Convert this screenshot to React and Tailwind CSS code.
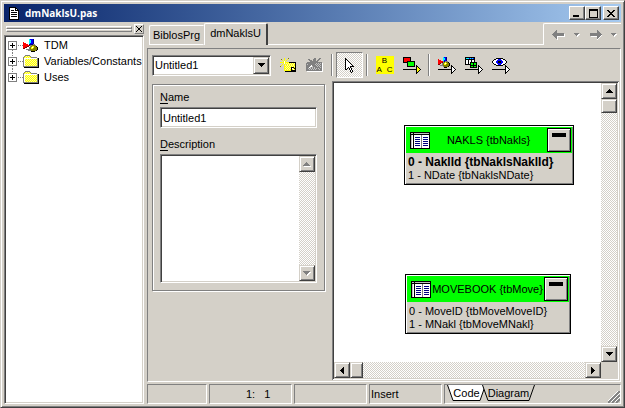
/**
 * App.jsx – Code editor window with the diagram page open
 * Composes: TitleBar, UnitTree, TabStrip, Toolbar, DetailsPanel, DiagramCanvas, StatusBar
 */

// Shared bevels
const RAISED = 'bg-[#d4d0c8] border border-t-[#d4d0c8] border-l-[#d4d0c8] border-r-[#404040] border-b-[#404040] shadow-[inset_1px_1px_0_#fff,inset_-1px_-1px_0_#808080]';
const CAPTION = 'bg-[#d4d0c8] border border-t-white border-l-white border-r-[#404040] border-b-[#404040] shadow-[inset_-1px_-1px_0_#808080]';
const SUNKEN = 'bg-white border border-t-[#808080] border-l-[#808080] border-r-white border-b-white shadow-[inset_1px_1px_0_#404040,inset_-1px_-1px_0_#d4d0c8]';
const THIN_SUNKEN = 'border border-t-[#808080] border-l-[#808080] border-r-white border-b-white';
const DITHER = 'bg-[repeating-conic-gradient(#fff_0_25%,#d4d0c8_0_50%)] bg-[length:2px_2px]';

const PALETTE = {
  X: '#000000', '.': '#ffffff', Y: '#ffff00', y: '#808000', R: '#ff0000', r: '#800000',
  B: '#0000ff', b: '#000080', C: '#00ffff', G: '#808080', g: '#c0c0c0', L: '#ffff99', H: '#00ff00',
};

const CURSOR = [
  'X', 'XX', 'X.X', 'X..X', 'X...X', 'X....X', 'X.....X', 'X......X', 'X....XXXX',
  'X..X.X', 'X.X X.X', 'XX  X.X', '     X.X', '     X.X', '      X',
];

const UNIT = [
  'XXXXXXX',
  'X.....XX',
  'X.....X.X',
  'X.XXX.XXXX',
  'X........X',
  'X.XXXXXX.X',
  'X........X',
  'X.XXXXXX.X',
  'X........X',
  'X.XXXXXX.X',
  'X........X',
  'X........X',
  'XXXXXXXXXX',
];

const FOLDER = [
  '  GGGGG',
  ' GYLYLYG',
  'GYLYLYLYGGGGGG',
  'G.............GX',
  'G.LYLYLYLYLYLYGX',
  'G.YLYLYLYLYLYLGX',
  'G.LYLYLYLYLYLYGX',
  'G.YLYLYLYLYLYLGX',
  'G.LYLYLYLYLYLYGX',
  'G.YLYLYLYLYLYLGX',
  'G.LYLYLYLYLYLYGX',
  'GGGGGGGGGGGGGGGX',
  ' XXXXXXXXXXXXXXX',
];

const MODULE = [
  '      CBBBb',
  '      CCBBb',
  '      CCBBb',
  'R     CCBBb',
  'RRR   CBBBb',
  'RRRRR bbbbGG',
  'RRRRRRrGGyyyG',
  'RRRRrr GyYYyyX',
  'RRrr  GyY.YyyyX',
  'rr    GyYYyyyyX',
  '   GGGGyyyyyyyX',
  '     GGGyyyyyX',
  '        XXXX',
];

const MODULE_SMALL = [
  '     CBBb',
  '     CCBb',
  'R    CCBb',
  'RRR  CBBb',
  'RRRRRGbGGG',
  'RRRRrGyYyyX',
  'RRr GyY.YyyX',
  'rr  GyYYyyyX',
  '  GGGyyyyyyX',
  '     GyyyyX',
  '      XXX',
];

const NEW_ITEM = [
  '    Y   y',
  ' y  Y  Y',
  '  Y Y Y',
  '   Y.Y',
  'YYYY.YYYYXXXXXXX',
  '   Y.YLYLYLYLYLX',
  '  Y Y YLYLYLYLYX',
  ' Y  YLYLYLYLYLYX',
  'y   YYLYLYLYLYLX',
  '    YLYLYLYXXXYX',
  '    YYLYLYLX.YXX',
  '    YLYLYLYXY.YX',
  '    YYYYYYYXXXXX',
  '     XXXXXXXXXXX',
];

const REMOVE_ITEM = [
  '        GG   GG',
  '  GG   GGG  GG',
  '   GGG GGG GG',
  '    GGGGGGGG',
  ' GGGGGGGGGGGGGGG',
  'GGGGGGGGGGgGgGgG.',
  'GgGGGGGGGgGgGgGG.',
  'GGGGG.GGGGgGgGgG.',
  'GGGG..gGGGGgGgGG.',
  'GGG.gGgGgGGGGGgG.',
  'GGgGgGgGgGgGgGGG.',
  'GGGgGgGgGgGGGgGG.',
  'GGGGGGGGGGGGGGGG.',
  ' ................',
];

const EYE = [
  '    XXXXXXX',
  '  XX..BBB..XX',
  ' X...BBBBB...X',
  'X...BBXXXBB...X',
  'X...BBXXXBB...X',
  ' X...BBBBB...X',
  '  XX..BBB..XX',
  '    XXXXXXX',
];

const MASTER_DETAIL = [
  'XXXXXXXXXX',
  'XCCCBCBCBX',
  'XXXXXXXXXX',
  'X..X..X..X',
  'X..X..X..X',
  'X..X.XXXXXXX',
  'X..X.XHHXHHX',
  'XXXXXXHHXHHX',
  '     XXXXXXX',
  '     XHHXHHX',
  '     XXXXXXX',
];

const BACK_ARROW = [
  '    G', '   GG', '  GGG', ' GGGGGGGGGGG', 'GGGGGGGGGGGG.', ' GGGGGGGGGGG.', '  GGG........', '   GG.', '    G.', '     .',
];

const FORWARD_ARROW = [
  '       G', '       GG', '       GGG', 'GGGGGGGGGGG', 'GGGGGGGGGGGG', 'GGGGGGGGGGG.', ' ......GGG.', '       GG.', '       G.', '       .',
];

const DROP_ARROW = ['GGGGG', ' GGG..', '  G..', '   .'];

const LINK_HEADS = {
  white:  ['X', 'XX', 'X.X', 'X..X', 'X...X', 'X..X', 'X.X', 'XX', 'X'],
  yellow: ['X', 'XX', 'XYX', 'XYYX', 'XYYYX', 'XYYX', 'XYX', 'XX', 'X'],
};

const GLYPHS = {
  up:    ['   X', '  XXX', ' XXXXX', 'XXXXXXX'],
  down:  ['XXXXXXX', ' XXXXX', '  XXX', '   X'],
  left:  ['   X', '  XX', ' XXX', 'XXXX', ' XXX', '  XX', '   X'],
  right: ['X', 'XX', 'XXX', 'XXXX', 'XXX', 'XX', 'X'],
  upOff:   ['   G', '  GGG', ' GGGGG', 'GGGGGGG', ' .......'],
  downOff: ['GGGGGGG', ' GGGGG..', '  GGG..', '   G..', '    .'],
  close: ['XX    XX', ' XX  XX', '  XXXX', '   XX', '  XXXX', ' XX  XX', 'XX    XX'],
  closeSmall: ['X    X', ' X  X', '  XX', '  XX', ' X  X', 'X    X'],
  max:   ['XXXXXXXXX', 'XXXXXXXXX', 'X       X', 'X       X', 'X       X', 'X       X', 'X       X', 'X       X', 'XXXXXXXXX'],
  min:   ['XXXXXX', 'XXXXXX'],
};

function Pixels({ rows, x = 0, y = 0 }) {
  return rows.map((row, j) =>
    [...row].map((c, i) =>
      c === ' ' ? null : <rect key={`${i}-${j}`} x={x + i} y={y + j} width="1" height="1" fill={PALETTE[c]} />
    )
  );
}

function PixelIcon({ rows }) {
  const w = Math.max(...rows.map((r) => r.length));
  return (
    <svg width={w} height={rows.length} shapeRendering="crispEdges" className="block flex-shrink-0" aria-hidden="true">
      <Pixels rows={rows} />
    </svg>
  );
}

/* ── Title bar ── */
function TitleBar() {
  return (
    <header className="h-[18px] flex-shrink-0 flex items-center pl-[5px] pr-0.5 bg-linear-to-r from-[#0a246a] to-[#a6caf0]">
      <PixelIcon rows={UNIT} />
      <h1 className="ml-1.5 text-white font-bold text-[10px] leading-[14px] font-['Open_Sans',sans-serif]">dmNaklsU.pas</h1>
      <div className="ml-auto flex">
        <button aria-label="Minimize" className={`w-4 h-3.5 flex items-end pl-[3px] pb-0.5 ${CAPTION}`}><PixelIcon rows={GLYPHS.min} /></button>
        <button aria-label="Maximize" className={`w-4 h-3.5 flex items-center justify-center ${CAPTION}`}><PixelIcon rows={GLYPHS.max} /></button>
        <button aria-label="Close" className={`w-4 h-3.5 ml-0.5 flex items-center justify-center ${CAPTION}`}><PixelIcon rows={GLYPHS.close} /></button>
      </div>
    </header>
  );
}

/* ── Unit tree ── */
const TREE = [
  { label: 'TDM', icon: MODULE },
  { label: 'Variables/Constants', icon: FOLDER },
  { label: 'Uses', icon: FOLDER },
];

function Expander({ first, last }) {
  return (
    <svg width="15" height="16" shapeRendering="crispEdges" className="block">
      <g stroke="#808080" strokeDasharray="1 1">
        {!first && <path d="M4.5 0V4" />}
        {!last && <path d="M4.5 13V16" />}
        <path d="M10 8.5H15" />
      </g>
      <rect x="0.5" y="4.5" width="8" height="8" fill="#fff" stroke="#808080" />
      <path d="M2 8.5H7M4.5 6V11" stroke="#000" />
    </svg>
  );
}

function UnitTree() {
  return (
    <aside className="w-[140px] flex-shrink-0 flex flex-col pt-0.5">
      <div className="h-[11px] flex pl-0.5">
        <div className="flex-1 pt-0.5">
          <div className="h-[3px] border border-t-white border-l-white border-r-[#808080] border-b-[#808080]" />
          <div className="h-[3px] border border-t-white border-l-white border-r-[#808080] border-b-[#808080]" />
        </div>
        <button aria-label="Close panel" className="w-2.5 h-2.5 ml-0.5 flex items-center justify-center border border-t-white border-l-white border-r-[#808080] border-b-[#808080]">
          <PixelIcon rows={GLYPHS.closeSmall} />
        </button>
      </div>
      <ul className={`flex-1 pt-px pl-[3px] ${SUNKEN}`}>
        {TREE.map((node, i) => (
          <li key={node.label} className="h-4 flex items-center whitespace-nowrap">
            <button aria-label={`Expand ${node.label}`}><Expander first={i === 0} last={i === TREE.length - 1} /></button>
            <span className="w-4 flex-shrink-0"><PixelIcon rows={node.icon} /></span>
            <span className="ml-[5px]">{node.label}</span>
          </li>
        ))}
      </ul>
    </aside>
  );
}

/* ── Editor tabs + navigation arrows ── */
function TabStrip() {
  return (
    <div className="h-[23px] flex-shrink-0 flex items-end">
      <div role="tablist" className="flex items-end pl-0.5">
        <button role="tab" aria-selected="false" className="h-5 w-[55px] text-center border border-white border-r-transparent rounded-tl-xs">BiblosPrg</button>
        <button role="tab" aria-selected="true" className="h-[22px] w-16 pb-0.5 text-center border-t border-l border-r-2 border-t-white border-l-white border-r-[#404040] rounded-t-xs">dmNaklsU</button>
      </div>
      <div className="flex-1 border-b border-white" />
      <nav className="w-[78px] h-[22px] flex items-center justify-between pl-2 pr-1 border-t border-l border-white rounded-tl-xs">
        <button aria-label="Back"><PixelIcon rows={BACK_ARROW} /></button>
        <button aria-label="Back history"><PixelIcon rows={DROP_ARROW} /></button>
        <button aria-label="Forward"><PixelIcon rows={FORWARD_ARROW} /></button>
        <button aria-label="Forward history"><PixelIcon rows={DROP_ARROW} /></button>
      </nav>
    </div>
  );
}

/* ── Toolbar ── */
function Sep() {
  return <div className="w-0.5 h-[22px] mx-[3px] flex-shrink-0 border-l border-r border-l-[#808080] border-r-white" />;
}

function ToolButton({ label, active, children }) {
  return (
    <button
      aria-label={label}
      className={`w-[27px] h-[26px] flex-shrink-0 flex items-center justify-center ${active ? `${THIN_SUNKEN} ${DITHER}` : ''}`}
    >
      {children}
    </button>
  );
}

// Drawing above a short line that ends in an arrow head
function LinkIcon({ head = 'white', children }) {
  return (
    <svg width="18" height="17" shapeRendering="crispEdges" className="block">
      {children}
      <path d="M0 12.5H13" stroke="#000" />
      <Pixels rows={LINK_HEADS[head]} x={13} y={8} />
    </svg>
  );
}

function AbcIcon() {
  return (
    <span className="w-[18px] h-[18px] grid grid-rows-2 bg-[#ffff00] text-[8px] leading-[9px]">
      <span className="text-center">B</span>
      <span className="flex justify-between px-px"><span>A</span><span>C</span></span>
    </span>
  );
}

function Toolbar() {
  return (
    <div className="h-[26px] flex-shrink-0 flex items-center">
      <div className={`relative w-[119px] h-[21px] mr-[3px] flex-shrink-0 ${SUNKEN}`}>
        <select aria-label="Diagram" className="w-full h-full pl-0.5 appearance-none bg-transparent outline-none">
          <option>Untitled1</option>
        </select>
        <span className={`pointer-events-none absolute right-px top-px bottom-px w-4 flex items-center justify-center ${RAISED}`}>
          <PixelIcon rows={GLYPHS.down} />
        </span>
      </div>
      <ToolButton label="New diagram"><PixelIcon rows={NEW_ITEM} /></ToolButton>
      <ToolButton label="Delete diagram"><PixelIcon rows={REMOVE_ITEM} /></ToolButton>
      <Sep />
      <ToolButton label="Select" active><PixelIcon rows={CURSOR} /></ToolButton>
      <Sep />
      <ToolButton label="Comment block"><AbcIcon /></ToolButton>
      <ToolButton label="Comment allude">
        <LinkIcon head="yellow">
          <rect x="0.5" y="0.5" width="7" height="5" fill="#f00" stroke="#000" />
          <rect x="4.5" y="4.5" width="7" height="5" fill="#0f0" stroke="#000" />
        </LinkIcon>
      </ToolButton>
      <Sep />
      <ToolButton label="Property">
        <LinkIcon><Pixels rows={MODULE_SMALL} /></LinkIcon>
      </ToolButton>
      <ToolButton label="Master detail">
        <LinkIcon><Pixels rows={MASTER_DETAIL} /></LinkIcon>
      </ToolButton>
      <ToolButton label="Lookup field">
        <LinkIcon><Pixels rows={EYE} y={1} /></LinkIcon>
      </ToolButton>
    </div>
  );
}

/* ── Scroll bars ── */
function ScrollButton({ dir, label }) {
  return (
    <button aria-label={label} className={`w-4 h-4 flex-shrink-0 flex items-center justify-center ${RAISED}`}>
      <PixelIcon rows={GLYPHS[dir]} />
    </button>
  );
}

/* ── Name / description form ── */
function DetailsPanel() {
  return (
    <form className="w-[173px] flex-shrink-0 self-start mt-[3px] px-[7px] pt-1.5 pb-[7px] border border-[#808080] shadow-[inset_1px_1px_0_#fff,1px_1px_0_#fff]">
      <label htmlFor="name" className="block h-4"><u className="underline-offset-2">N</u>ame</label>
      <input id="name" defaultValue="Untitled1" className={`block w-full h-[21px] px-0.5 outline-none ${SUNKEN}`} />
      <label htmlFor="description" className="block h-4 mt-2.5"><u className="underline-offset-2">D</u>escription</label>
      <div className={`h-[129px] flex p-px ${SUNKEN}`}>
        <textarea id="description" className="flex-1 min-w-0 px-0.5 resize-none outline-none" />
        <div className={`flex flex-col justify-between ${DITHER}`}>
          <ScrollButton dir="upOff" label="Scroll description up" />
          <ScrollButton dir="downOff" label="Scroll description down" />
        </div>
      </div>
    </form>
  );
}

/* ── Diagram ── */
const TABLES = [
  {
    title: 'NAKLS {tbNakls}', place: 'left-[70px] top-[42px] w-[170px]',
    fields: [{ text: '0 - NaklId {tbNaklsNaklId}', key: true }, { text: '1 - NDate {tbNaklsNDate}' }],
  },
  {
    title: 'MOVEBOOK {tbMove}', place: 'left-[71px] top-[191px] w-[166px]',
    fields: [{ text: '0 - MoveID {tbMoveMoveID}' }, { text: '1 - MNakl {tbMoveMNakl}' }],
  },
];

function TableIcon() {
  return (
    <svg width="20" height="17" shapeRendering="crispEdges" className="block flex-shrink-0">
      <rect x="0.5" y="0.5" width="19" height="16" fill="#fff" stroke="#000" />
      <path d="M1 1.5H19M1.5 3V16" stroke="#c0c0c0" />
      <path d="M1 2.5H19M3.5 1V16" stroke="#000" />
      <path d="M11.5 3V16" stroke="#808080" />
      <path d="M5 5.5H10M5 7.5H10M5 9.5H10M5 11.5H10M5 13.5H10" stroke="#000080" />
      <path d="M13 5.5H18M13 7.5H18M13 9.5H18M13 11.5H18M13 13.5H18" stroke="#000080" />
    </svg>
  );
}

function TableNode({ title, place, fields }) {
  return (
    <section className={`absolute ${place} p-px bg-[#d4d0c8] border border-black shadow-[inset_1px_1px_0_#fff,inset_-1px_-1px_0_#808080]`}>
      <header className="h-[26px] flex items-center pl-1 pr-px bg-[#00ff00]">
        <TableIcon />
        <h2 className="flex-1 min-w-0 flex justify-center whitespace-nowrap">{title}</h2>
        <button aria-label="Collapse" className="w-6 h-6 flex-shrink-0 flex justify-center pt-1 bg-[#d4d0c8] border border-black shadow-[inset_1px_1px_0_#fff,inset_-1px_-1px_0_#808080]">
          <span className="block w-3.5 h-1 bg-black" />
        </button>
      </header>
      <ul className="pt-[3px] pb-px pl-0.5">
        {fields.map((f) => (
          <li key={f.text} className={`whitespace-nowrap ${f.key ? 'font-bold text-[12px] leading-[13px]' : ''}`}>{f.text}</li>
        ))}
      </ul>
    </section>
  );
}

function DiagramCanvas() {
  return (
    <section className="flex-1 min-w-0 ml-[7px] p-0.5 grid grid-cols-[1fr_16px] grid-rows-[1fr_16px] bg-white shadow-[inset_1px_1px_0_#808080,inset_-1px_-1px_0_#fff,inset_2px_2px_0_#404040,inset_-2px_-2px_0_#d4d0c8]">
      <div className="relative overflow-hidden">
        {TABLES.map((t) => <TableNode key={t.title} {...t} />)}
      </div>
      <div className={`flex flex-col ${DITHER}`}>
        <ScrollButton dir="up" label="Scroll up" />
        <div className={`h-3.5 ${RAISED}`} />
        <div className="flex-1" />
        <ScrollButton dir="down" label="Scroll down" />
      </div>
      <div className={`flex ${DITHER}`}>
        <ScrollButton dir="left" label="Scroll left" />
        <div className={`w-[13px] ${RAISED}`} />
        <div className="flex-1" />
        <ScrollButton dir="right" label="Scroll right" />
      </div>
      <div className="bg-[#d4d0c8]" />
    </section>
  );
}

/* ── Status bar with the Code / Diagram page tabs ── */
const PAGES = [
  { label: 'Code', width: 'w-[39px]', fill: '#fff', points: '0.5,0 6,15.5 33,15.5 38.5,0' },
  { label: 'Diagram', width: 'w-[53px] -ml-1', fill: '#d4d0c8', points: '0.5,0 6,15.5 47,15.5 52.5,0' },
];

function StatusBar() {
  return (
    <footer className="h-5 mt-0.5 flex-shrink-0 flex gap-0.5 leading-[18px] whitespace-pre">
      <div className={`w-[60px] ${THIN_SUNKEN}`} />
      <div className={`w-[83px] pl-9 ${THIN_SUNKEN}`}>{'1:   1'}</div>
      <div className={`w-[73px] ${THIN_SUNKEN}`} />
      <div className={`w-[73px] pl-px ${THIN_SUNKEN}`}>Insert</div>
      <div className={`flex-1 flex pl-0.5 ${THIN_SUNKEN}`}>
        {PAGES.map((p) => (
          <button key={p.label} className={`relative h-4 leading-4 text-center ${p.width}`}>
            <svg className="absolute inset-0 w-full h-full">
              <polyline points={p.points} fill={p.fill} stroke="#000" />
            </svg>
            <span className="relative">{p.label}</span>
          </button>
        ))}
        <svg width="12" height="12" className="ml-auto self-end">
          <path d="M0 12L12 0M4 12L12 4M8 12L12 8" stroke="#808080" strokeWidth="2" />
          <path d="M-1 11L11 -1M3 11L12 2M7 11L12 6" stroke="#fff" />
        </svg>
      </div>
    </footer>
  );
}

export default function App() {
  return (
    <div className="h-screen flex flex-col p-[3px] bg-[#d4d0c8] border border-t-[#d4d0c8] border-l-[#d4d0c8] border-r-[#404040] border-b-[#404040] shadow-[inset_1px_1px_0_#fff,inset_-1px_-1px_0_#808080] text-black text-[11px] leading-[13px] font-['Liberation_Sans',sans-serif] overflow-hidden select-none">
      <TitleBar />
      <div className="flex-1 min-h-0 flex gap-[3px]">
        <UnitTree />
        <main className="flex-1 min-w-0 flex flex-col">
          <TabStrip />
          <div className={`flex-1 min-h-0 mt-[3px] flex flex-col pl-1 pr-px pt-[3px] pb-px ${THIN_SUNKEN}`}>
            <Toolbar />
            <div className="flex-1 min-h-0 mt-[3px] flex">
              <DetailsPanel />
              <DiagramCanvas />
            </div>
          </div>
          <StatusBar />
        </main>
      </div>
    </div>
  );
}
